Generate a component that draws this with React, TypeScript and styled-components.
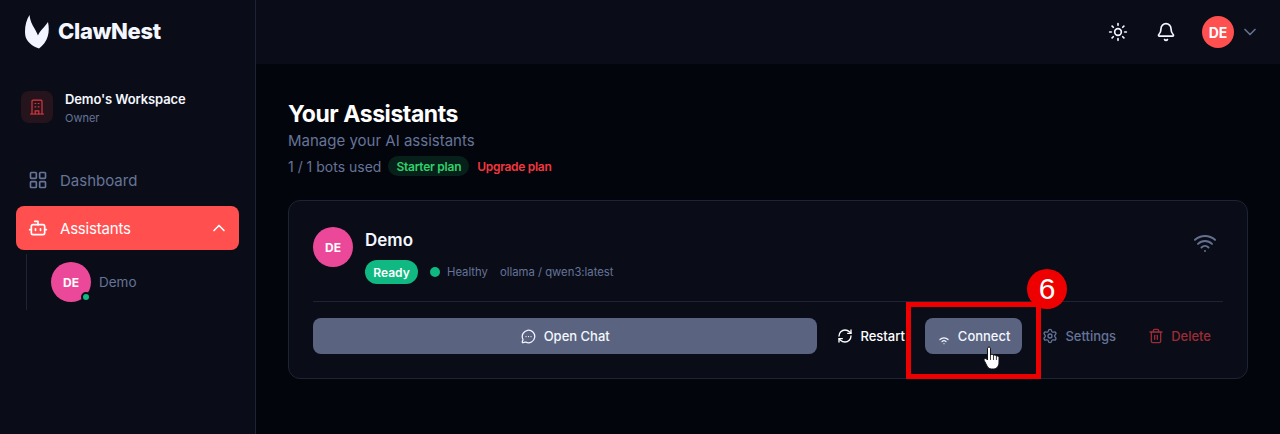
import React from 'react';
import styled, { createGlobalStyle } from 'styled-components';
import { LayoutGrid, Bot, ChevronUp, ChevronDown, Sun, Bell, Wifi, MessageCircleMore, RefreshCw, Settings, Trash2 } from 'lucide-react';

const Global = createGlobalStyle`
  html, body { margin: 0; padding: 0; height: 434px; overflow: hidden; background: #03050c; }
  #root { height: 434px; }
  * { box-sizing: border-box; }
`;
const Page = styled.div`
  display: flex; position: relative; width: 1280px; height: 434px; overflow: hidden;
  background: #03050c; font-family: Inter, "Liberation Sans", sans-serif; color: #f5f7ff;
`;
const Sidebar = styled.aside`
  width: 256px; flex: none; background: #0a0d17; border-right: 1px solid #1e2433;
  display: flex; flex-direction: column; padding: 0 16px;
`;
const Brand = styled.div`
  height: 64px; display: flex; align-items: center; gap: 9px; padding-left: 9px;
`;
const BrandName = styled.span`
  font-size: 22px; font-weight: 800; letter-spacing: -0.35px; color: #f4f7ff; margin-top: -2px;
`;
const Workspace = styled.div`
  display: flex; align-items: center; gap: 12px; margin: 27px 0 0 5px; height: 32px;
`;
const WsIcon = styled.div`
  width: 32px; height: 32px; border-radius: 8px; background: #26141c; color: #d8363f;
  display: flex; align-items: center; justify-content: center;
`;
const WsText = styled.div`display: flex; flex-direction: column; gap: 3px;`;
const WsName = styled.div`font-size: 13px; font-weight: 600; line-height: 18px; color: #f4f7ff; letter-spacing: -0.12px;`;
const WsRole = styled.div`font-size: 11px; line-height: 14px; color: #667499;`;
const NavItem = styled.div<{ $active?: boolean }>`
  height: 44px; display: flex; align-items: center; gap: 12px; padding: 0 10px 0 12px;
  border-radius: 8px; font-size: 15px; font-weight: 400;
  background: ${p => (p.$active ? '#ff4f4f' : 'transparent')};
  color: ${p => (p.$active ? '#ffffff' : '#667499')};
  margin-top: ${p => (p.$active ? '4px' : '35px')};
`;
const NavLabel = styled.span<{ $tight?: boolean }>`flex: 1; letter-spacing: ${p => (p.$tight ? '-0.2px' : '0')};`;
const SubList = styled.div`
  margin: 4px 0 0 10px; height: 56px; border-left: 1px solid #1e2433;
  display: flex; align-items: center; padding-left: 24px; gap: 8px; padding-top: 0;
`;
const AvatarWrap = styled.div`position: relative; width: 40px; height: 40px; flex: none;`;
const Avatar = styled.div<{ $bg: string; $size: number }>`
  width: ${p => p.$size}px; height: ${p => p.$size}px; border-radius: 50%; background: ${p => p.$bg};
  display: flex; align-items: center; justify-content: center; color: #fff; flex: none;
  font-size: ${p => (p.$size === 32 ? 14 : 12)}px; font-weight: 700;
`;
const StatusDot = styled.span`
  position: absolute; right: 0; bottom: 0; width: 10px; height: 10px; border-radius: 50%;
  background: #10b981; border: 2px solid #0a0d17;
`;
const SubName = styled.span`font-size: 13.5px; color: #667499;`;
const Main = styled.main`flex: 1; display: flex; flex-direction: column; min-width: 0;`;
const Header = styled.header`
  height: 64px; flex: none; background: #0a0d17; display: flex; align-items: center;
  justify-content: flex-end; padding-right: 20px; color: #f4f7ff;
`;
const HeaderIcon = styled.div<{ $gap: number }>`
  width: 20px; height: 20px; display: flex; align-items: center; justify-content: center; margin-right: ${p => p.$gap}px;
`;
const Chevron = styled.div`color: #64708f; display: flex; margin-left: 6px;`;
const Content = styled.div`padding: 36px 32px 0;`;
const Title = styled.h1`margin: 0; font-size: 23px; letter-spacing: -0.45px; line-height: 28px; font-weight: 700; color: #fff;`;
const Subtitle = styled.p`margin: 1px 0 0; font-size: 15px; line-height: 24px; color: #667499;`;
const Usage = styled.div`display: flex; align-items: center; height: 20px; margin-top: 3px; font-size: 14px; color: #667499;`;
const PlanPill = styled.span`
  margin-left: 7px; height: 20px; padding: 0 8px; border-radius: 10px; background: #07201a; color: #2fd16b;
  font-size: 12px; font-weight: 600; letter-spacing: -0.25px; display: flex; align-items: center;
`;
const Upgrade = styled.span`margin-left: 8px; font-size: 12px; font-weight: 600; letter-spacing: -0.3px; color: #f4373f;`;
const Card = styled.section`
  margin-top: 24px; width: 960px; height: 179px; border-radius: 12px; border: 1px solid #1e2433;
  background: #0a0d17; padding: 26px 24px 0; display: flex; flex-direction: column;
`;
const CardTop = styled.div`display: flex; gap: 12px; height: 75px; border-bottom: 1px solid #1e2433;`;
const CardInfo = styled.div`flex: 1; display: flex; flex-direction: column;`;
const BotName = styled.div`font-size: 17px; line-height: 26px; font-weight: 600; color: #f4f7ff;`;
const Meta = styled.div`display: flex; align-items: center; margin-top: 7px; font-size: 11.3px; color: #667499;`;
const Ready = styled.span`
  height: 24px; width: 53px; border-radius: 12px; background: #10b981; color: #fff; font-size: 12px; font-weight: 600;
  display: flex; align-items: center; justify-content: center; margin-right: 12px;
`;
const HealthDot = styled.span`width: 10px; height: 10px; border-radius: 50%; background: #10b981; margin-right: 7px;`;
const Model = styled.span`margin-left: 12px;`;
const WifiBox = styled.div`color: #64708f; margin: 4px 6px 0 0;`;
const Actions = styled.div`display: flex; gap: 8px; margin-top: 16px; height: 36px;`;
const Primary = styled.button`
  flex: 1; border: 0; border-radius: 8px; background: #5a6480; color: #f4f7ff; display: flex; align-items: center;
  justify-content: center; gap: 8px; font: 500 13px Inter, sans-serif;
`;
const Action = styled.button<{ $tone: 'white' | 'muted' | 'danger' | 'hover' }>`
  border: 0; border-radius: 8px; display: flex; align-items: center; gap: 7px; font: 500 13px Inter, sans-serif; padding: 0 12px;
  background: ${p => (p.$tone === 'hover' ? '#5a6480' : 'transparent')};
  color: ${p => ({ white: '#ffffff', muted: '#667499', danger: '#9b2c36', hover: '#f4f7ff' }[p.$tone])};
`;
const ConnectIcon = styled.svg`margin-top: 6px;`;
const Highlight = styled.div`
  position: absolute; left: 906px; top: 302px; width: 135px; height: 77px; border: 5px solid #ee0000;
`;
const Badge = styled.div`
  position: absolute; left: 1027px; top: 269px; width: 40px; height: 40px; border-radius: 50%; background: #ee0000;
  color: #fff; font: 400 30px "Liberation Sans", sans-serif; display: flex; align-items: center; justify-content: center;
`;
const Cursor = styled.svg`position: absolute; left: 983px; top: 346px;`;

export default function App() {
  return (
    <Page>
      <Global />
      <Sidebar>
        <Brand>
          <svg width="24" height="34" viewBox="0 0 24 34" fill="#f2f5ff">
            <path d="M4.5 0 C5 5 7 10 9.5 13.5 C11 16 12.5 19 13 20.5 C14.5 16 18.5 13.5 23 7 C24.5 14 24 22 19.5 28 C17.5 30.5 15.5 32.5 14 33.5 C9 32 3.5 28.5 1 23 C-1 17 0 7 4.5 0 Z" />
          </svg>
          <BrandName>ClawNest</BrandName>
        </Brand>
        <Workspace>
          <WsIcon>
            <svg width="16" height="16" viewBox="0 0 16 16" fill="none" stroke="currentColor" strokeWidth="1.2" strokeLinecap="round">
              <path d="M1.5 15h13" />
              <path d="M3 15V2.2a1 1 0 0 1 1-1h8a1 1 0 0 1 1 1V15" />
              <path d="M6.2 15v-3.2h3.6V15" />
              <path d="M6 4.5h.8M9.2 4.5h.8M6 7.8h.8M9.2 7.8h.8" />
            </svg>
          </WsIcon>
          <WsText>
            <WsName>Demo's Workspace</WsName>
            <WsRole>Owner</WsRole>
          </WsText>
        </Workspace>
        <NavItem>
          <LayoutGrid size={20} strokeWidth={2} />
          <NavLabel>Dashboard</NavLabel>
        </NavItem>
        <NavItem $active>
          <Bot size={20} strokeWidth={2} />
          <NavLabel $tight>Assistants</NavLabel>
          <ChevronUp size={20} />
        </NavItem>
        <SubList>
          <AvatarWrap>
            <Avatar $bg="#ec4899" $size={40}>DE</Avatar>
            <StatusDot />
          </AvatarWrap>
          <SubName>Demo</SubName>
        </SubList>
      </Sidebar>
      <Main>
        <Header>
          <HeaderIcon $gap={28}><Sun size={20} /></HeaderIcon>
          <HeaderIcon $gap={26}><Bell size={20} /></HeaderIcon>
          <Avatar $bg="#ff4f4f" $size={32}>DE</Avatar>
          <Chevron><ChevronDown size={20} /></Chevron>
        </Header>
        <Content>
          <Title>Your Assistants</Title>
          <Subtitle>Manage your AI assistants</Subtitle>
          <Usage>
            1 / 1 bots used
            <PlanPill>Starter plan</PlanPill>
            <Upgrade>Upgrade plan</Upgrade>
          </Usage>
          <Card>
            <CardTop>
              <Avatar $bg="#ec4899" $size={40}>DE</Avatar>
              <CardInfo>
                <BotName>Demo</BotName>
                <Meta>
                  <Ready>Ready</Ready>
                  <HealthDot />
                  Healthy
                  <Model>ollama / qwen3:latest</Model>
                </Meta>
              </CardInfo>
              <WifiBox><Wifi size={24} /></WifiBox>
            </CardTop>
            <Actions>
              <Primary><MessageCircleMore size={15} />Open Chat</Primary>
              <Action $tone="white"><RefreshCw size={16} />Restart</Action>
              <Action $tone="hover">
                <ConnectIcon width="14" height="14" viewBox="0 0 24 24" fill="none" stroke="currentColor" strokeWidth="2" strokeLinecap="round">
                  <path d="M12 20h.01" /><path d="M8.5 16.4a5 5 0 0 1 7 0" /><path d="M5 12.9a10 10 0 0 1 14 0" />
                </ConnectIcon>
                Connect
              </Action>
              <Action $tone="muted"><Settings size={16} />Settings</Action>
              <Action $tone="danger"><Trash2 size={16} />Delete</Action>
            </Actions>
          </Card>
        </Content>
      </Main>
      <Highlight />
      <Badge>6</Badge>
      <Cursor width="18" height="24" viewBox="0 0 18 24">
        <path d="M4.5 2.2 C4.5 .6 7.5 .6 7.5 2.2 V9 C8 8 10.5 8 10.5 9.5 C11 8.6 13.3 8.8 13.4 10.3 C14 9.6 16 10 16 11.6 V16 C16 20 14 23 10.5 23 H8.5 C6 23 4.8 21.5 3.8 19.5 L1.2 14.5 C.4 12.8 2.6 11.6 3.7 13 L4.5 14 Z" fill="#fff" stroke="#111" strokeWidth="1" />
        <path d="M7.5 9 V14 M10.5 9.5 V14 M13.4 10.3 V14" stroke="#111" strokeWidth=".8" />
      </Cursor>
    </Page>
  );
}
